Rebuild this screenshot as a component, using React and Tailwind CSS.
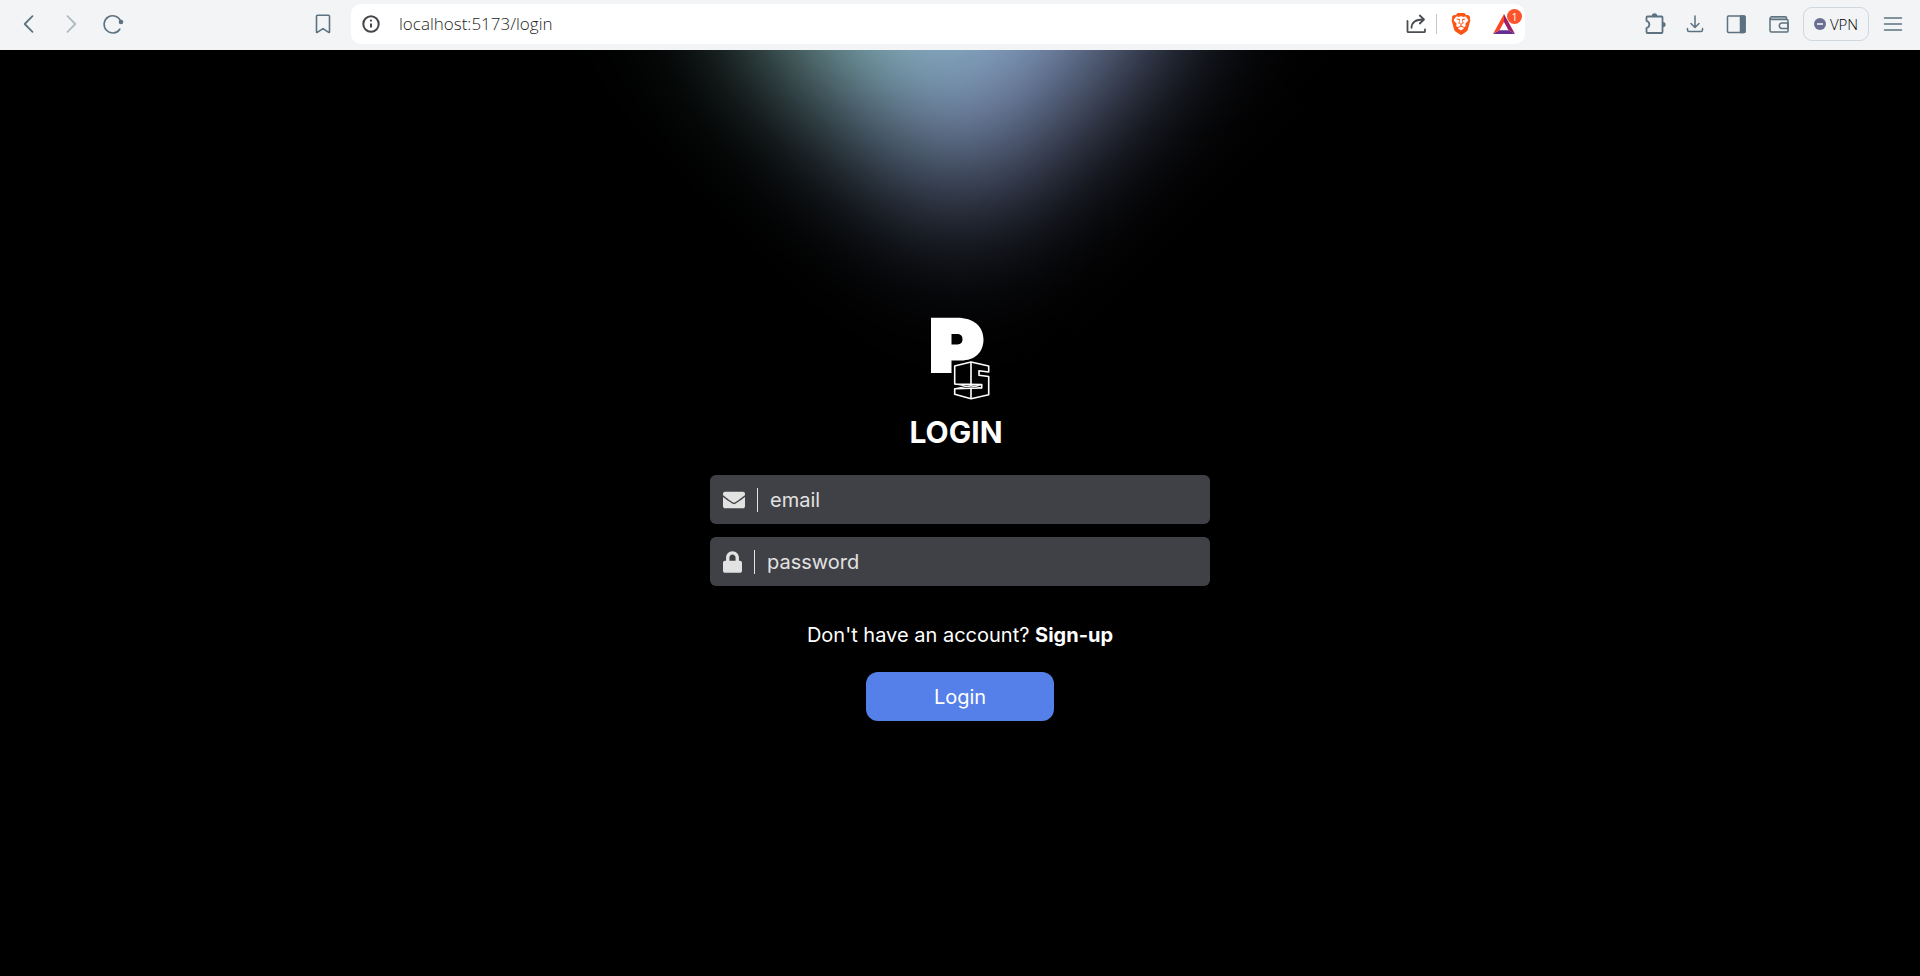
import React from "react";
import { FaEnvelope, FaLock } from "react-icons/fa";
import { SiBrave } from "react-icons/si";

function IconButton({ label, className = "", children }) {
  return (
    <button
      type="button"
      aria-label={label}
      className={`flex h-6 w-6 shrink-0 items-center justify-center text-[#5d7280] ${className}`}
    >
      {children}
    </button>
  );
}

function Line({ children, className = "", width = 1.5 }) {
  return (
    <svg
      viewBox="0 0 24 24"
      className={`h-6 w-6 ${className}`}
      fill="none"
      stroke="currentColor"
      strokeWidth={width}
      strokeLinecap="round"
      strokeLinejoin="round"
      aria-hidden="true"
    >
      {children}
    </svg>
  );
}

function Toolbar() {
  return (
    <header className="flex h-[50px] items-center bg-[#f2f4f6] pr-[15px] pb-0.5 pl-[17px] font-['Open_Sans','Noto_Sans',sans-serif]">
      <nav className="flex items-center gap-[18px]">
        <IconButton label="Back">
          <Line width={1.8}><path d="M15.500 4.200 7.700 12l7.800 7.800" /></Line>
        </IconButton>
        <IconButton label="Forward" className="opacity-45">
          <Line width={1.8}><path d="m8.500 4.200 7.800 7.800-7.800 7.800" /></Line>
        </IconButton>
        <IconButton label="Reload">
          <Line width={1.6}>
            <path d="M18.800 17.200A8.600 8.600 0 1 1 19.800 9.500" />
            <circle cx="20" cy="10" r="2.300" fill="currentColor" stroke="none" />
          </Line>
        </IconButton>
      </nav>
      <IconButton label="Bookmark" className="ml-[186px]">
        <Line width={1.600}>
          <path d="M5.500 4.200a1 1 0 0 1 1-1h11a1 1 0 0 1 1 1V20a.5.5 0 0 1-.8.4L12 16.600l-5.700 3.800a.5.5 0 0 1-.8-.4z" />
        </Line>
      </IconButton>

      <div className="ml-4 flex h-10 flex-1 items-center rounded-[10px] bg-white pr-[9px] pl-2">
        <IconButton label="Site information">
          <Line width={2} className="text-[#45474b]">
            <circle cx="12" cy="12" r="7.700" />
            <path d="M12 11.500v4" strokeLinecap="butt" />
            <circle cx="12" cy="8.600" r="1.100" fill="currentColor" stroke="none" />
          </Line>
        </IconButton>
        <input
          type="text"
          aria-label="Address"
          defaultValue="localhost:5173/login"
          className="ml-4 min-w-0 flex-1 bg-transparent text-[17px] font-light text-[#1c1e22] outline-none"
        />
        <IconButton label="Share">
          <Line width={1.8} className="text-[#4a4d51]">
            <path d="M3.500 9v10.200a1 1 0 0 0 1 1h15.500a1 1 0 0 0 1-1V17.500" />
            <path d="M7.500 15.800C7.500 10.500 11 7.500 19.500 7.500M15.800 3.500l4.200 4-4.200 4" />
          </Line>
        </IconButton>
        <span className="ml-2 h-5 w-px bg-[#c4c8cc]" />
        <IconButton label="Brave Shields" className="ml-3">
          <SiBrave className="h-[22px] w-[22px] text-[#fb5414]" />
        </IconButton>
        <IconButton label="Brave Rewards" className="relative ml-[19px]">
          <svg viewBox="0 0 24 24" className="h-6 w-6" aria-hidden="true">
            <path d="M12 2 1 22l6.500-3.700L12 10z" fill="#ff4724" />
            <path d="M12 2l11 20-6.500-3.700L12 10z" fill="#9e1f63" />
            <path d="M1 22h22l-6.500-3.700h-9z" fill="#662d91" />
          </svg>
          <span className="absolute -top-[3px] left-[15px] flex h-[15px] w-[15px] items-center justify-center rounded-full bg-[#fb542b] text-[10px] leading-none text-white">
            1
          </span>
        </IconButton>
      </div>

      <div className="ml-[118px] flex items-center">
        <IconButton label="Extensions">
          <Line width={1.800}>
            <path d="M4.500 4.500h14a1 1 0 0 1 1 1V20a1 1 0 0 1-1 1h-14a1 1 0 0 1-1-1v-4c3.800-1 3.800-6 0-7V5.500a1 1 0 0 1 1-1z" />
            <path d="M8.800 4a2.700 2.700 0 0 1 5.400 0zM20 10a2.600 2.600 0 0 1 0 5.200z" fill="currentColor" stroke="none" />
          </Line>
        </IconButton>
        <IconButton label="Downloads" className="ml-4">
          <Line>
            <path d="M12 4v11M8 11.500l4 4 4-4M4.500 16.500V18a1.500 1.500 0 0 0 1.500 1.500h12a1.500 1.500 0 0 0 1.500-1.500v-1.500" />
          </Line>
        </IconButton>
        <IconButton label="Sidebar" className="ml-[17px]">
          <Line>
            <rect x="3.500" y="4" width="17.500" height="16.500" rx="1" />
            <path d="M16.500 4H20a1 1 0 0 1 1 1v14.500a1 1 0 0 1-1 1h-3.500z" fill="currentColor" />
          </Line>
        </IconButton>
        <IconButton label="Wallet" className="ml-[19px]">
          <Line>
            <path d="M19.500 7.500V5.800a1 1 0 0 0-1-1h-14a1.400 1.400 0 0 0 0 2.700H20a1 1 0 0 1 1 1V19a1 1 0 0 1-1 1H4.500A1.500 1.500 0 0 1 3 18.500V6" />
            <path d="M4.500 5h14.500v2.500H4.500z" fill="currentColor" fillOpacity=".4" stroke="none" />
            <path d="M21 11h-6a2.700 2.700 0 0 0 0 5.400h6z" />
          </Line>
        </IconButton>
        <button
          type="button"
          className="ml-3 flex h-[34px] w-[66px] items-center justify-center gap-1 rounded-[9px] border border-[#cfd8df] text-[15px] font-light text-black"
        >
          <svg viewBox="0 0 12 12" className="h-3 w-3" aria-hidden="true">
            <circle cx="6" cy="6" r="6" fill="#6b7093" />
            <path d="M3 6h6" stroke="#fff" strokeWidth="1.500" />
          </svg>
          VPN
        </button>
        <IconButton label="Menu" className="ml-3">
          <Line><path d="M3.500 6h17M3.500 12h17M3.500 18h17" /></Line>
        </IconButton>
      </div>
    </header>
  );
}

function Logo() {
  return (
    <svg viewBox="0 0 60 84" className="h-[84px] w-[60px]" role="img" aria-label="PS">
      <path
        d="M1 1.700h26c17 0 26.500 9 26.500 21.800C53.500 36 45 44.500 31 44.500h-9.500V57H1zM21.500 18v10.500h6c3.500 0 5-2.200 5-5.200s-1.500-5.300-5-5.300z"
        fill="#fff"
        fillRule="evenodd"
      />
      <path d="M22.500 47.500l18.500-4 20 5v32l-20 5-18.500-5z" fill="#000" />
      <g fill="none" stroke="#fff" strokeWidth="1.600" strokeLinejoin="round">
        <path d="M24.700 50 41 46l17.700 4v6l-9.700-1.300v4.500l9.700 1.300v18.200L41 82.700 24.700 78.300V72.700l27-.700v-3.400L24.700 68z" />
        <path d="M41 46v22.300M41 72.500v10" />
        <path d="M24.700 68 41 71l10.700-2.400M24.700 72.700 41 69.500l10.700 2.500" strokeWidth="1" />
      </g>
    </svg>
  );
}

function Field({ id, type, label, icon }) {
  return (
    <div className="flex h-[49px] items-center rounded-md bg-[#404146] px-[13px] text-[#e2e2e2]">
      <label htmlFor={id} aria-label={label} className="shrink-0">
        {icon}
      </label>
      <span className="ml-3 h-6 w-px shrink-0 bg-[#e2e2e2]" />
      <input
        id={id}
        type={type}
        placeholder={label}
        className="ml-3 min-w-0 flex-1 bg-transparent text-xl outline-none placeholder:text-[#e2e2e2]"
      />
    </div>
  );
}

export default function App() {
  return (
    <div className="flex min-h-screen flex-col bg-black">
      <Toolbar />
      <main className="relative flex flex-1 flex-col items-center overflow-hidden bg-black px-4 pt-[266px] pb-16 font-['Inter',sans-serif] text-white">
        <div
          aria-hidden="true"
          className="absolute -top-[222px] left-1/2 h-[328px] w-[328px] -translate-x-1/2 rotate-45 bg-[linear-gradient(to_right,#90c6be_10%,#8cc0be_31%,#8bbcc4_42%,#8ab4cc_53%,#8299be_72%,#8294c4_84%,#848ab8_100%)] blur-[70px]"
        />
        <div className="relative flex w-full max-w-[500px] flex-col">
          <div className="flex justify-center">
            <Logo />
          </div>
          <h1 className="mt-3.5 mr-2 text-center text-3xl font-bold">LOGIN</h1>
          <form className="mt-[25px] flex flex-col" onSubmit={(e) => e.preventDefault()}>
            <div className="flex flex-col gap-[13px]">
              <Field id="email" type="email" label="email" icon={<FaEnvelope className="h-[22px] w-[22px]" />} />
              <Field id="password" type="password" label="password" icon={<FaLock className="h-[22px] w-[19px]" />} />
            </div>
            <p className="mt-[35px] text-center text-xl">
              Don&apos;t have an account?{" "}
              <a href="#signup" className="font-bold">Sign-up</a>
            </p>
            <button type="submit" className="mt-[23px] h-[49px] w-[188px] self-center rounded-xl bg-[#5580e9] text-xl">
              Login
            </button>
          </form>
        </div>
      </main>
    </div>
  );
}
